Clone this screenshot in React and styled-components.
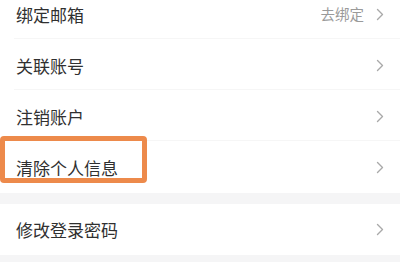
import React from "react";
import styled, { createGlobalStyle } from "styled-components";

const Global = createGlobalStyle`
  html, body {
    margin: 0;
    padding: 0;
    background: #f5f5f6;
  }
  body {
    font-family: "Noto Sans CJK SC", "Noto Sans", sans-serif;
    overflow: hidden;
  }
`;

const Chevron = () => (
  <svg width="8" height="13" viewBox="0 0 8 13">
    <polyline
      points="1.5,1.5 6.5,6.5 1.5,11.5"
      fill="none"
      stroke="#a9a9a9"
      strokeWidth="1.4"
      strokeLinecap="round"
      strokeLinejoin="round"
    />
  </svg>
);

export default function App() {
  const groups = [
    [
      { label: "绑定邮箱", value: "去绑定" },
      { label: "关联账号" },
      { label: "注销账户" },
      { label: "清除个人信息", marked: true },
    ],
    [{ label: "修改登录密码" }],
  ];

  return (
    <Screen>
      <Global />
      {groups.map((rows, gi) => (
        <Group key={gi} first={gi === 0}>
          {rows.map((row, ri) => (
            <Row key={ri} last={ri === rows.length - 1}>
              <Label>{row.label}</Label>
              <Right>
                {row.value && <Value>{row.value}</Value>}
                <Chevron />
              </Right>
              {row.marked && <Mark />}
            </Row>
          ))}
        </Group>
      ))}
    </Screen>
  );
}

const Screen = styled.div`
  width: 400px;
  height: 262px;
  overflow: hidden;
  background: #f5f5f6;
`;

const Group = styled.div`
  background: #ffffff;
  margin-top: ${(p) => (p.first ? "-11px" : "11px")};
`;

const Row = styled.div`
  position: relative;
  height: 51px;
  display: flex;
  align-items: center;
  justify-content: space-between;
  padding: 0 16px 0 16px;
  &::after {
    content: "";
    display: ${(p) => (p.last ? "none" : "block")};
    position: absolute;
    left: 14px;
    right: 0;
    bottom: 1px;
    height: 1px;
    background: #f6f6f6;
  }
`;

const Label = styled.span`
  font-size: 17px;
  color: #303030;
  line-height: 1;
`;

const Right = styled.div`
  display: flex;
  align-items: center;
  gap: 12px;
`;

const Value = styled.span`
  font-size: 14.5px;
  color: #9a9a9a;
  line-height: 1;
`;

const Mark = styled.div`
  position: absolute;
  left: 0;
  top: -6px;
  width: 147px;
  height: 47px;
  box-sizing: border-box;
  border: 5px solid #ed8a4b;
  border-radius: 4px;
`;
